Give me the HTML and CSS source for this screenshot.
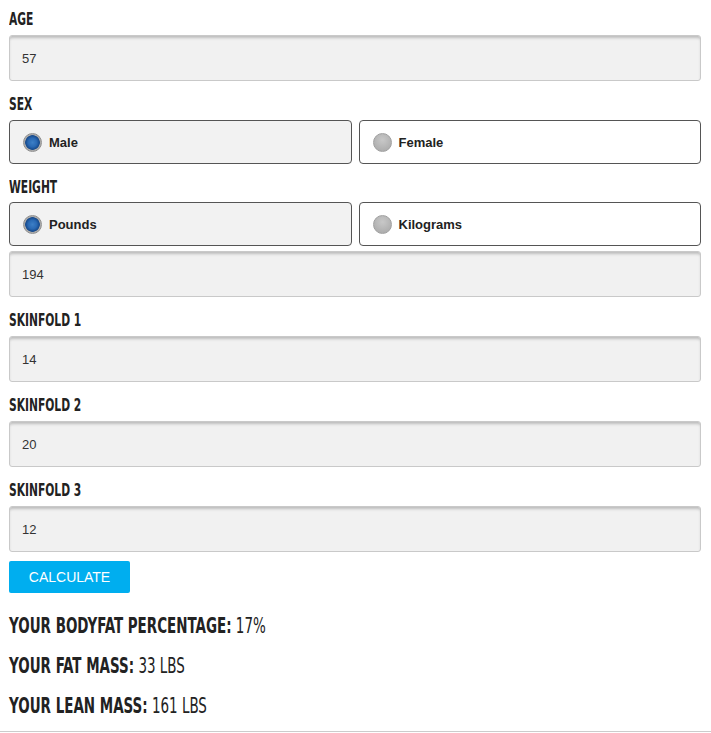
FILE: index.html
```html
<!DOCTYPE html>
<html>
<head>
<meta charset="utf-8">
<link rel="stylesheet" href="styles.css">
</head>
<body>
<div class="calc">
  <div class="field">
    <div class="label"><span class="cond">AGE</span></div>
    <div class="input">57</div>
  </div>
  <div class="field">
    <div class="label"><span class="cond">SEX</span></div>
    <div class="radios">
      <div class="radio selected"><span class="dot"></span><span class="rtext">Male</span></div>
      <div class="radio"><span class="dot"></span><span class="rtext">Female</span></div>
    </div>
  </div>
  <div class="field tight">
    <div class="label"><span class="cond">WEIGHT</span></div>
    <div class="radios">
      <div class="radio selected"><span class="dot"></span><span class="rtext">Pounds</span></div>
      <div class="radio"><span class="dot"></span><span class="rtext">Kilograms</span></div>
    </div>
    <div class="input">194</div>
  </div>
  <div class="field">
    <div class="label"><span class="cond">SKINFOLD 1</span></div>
    <div class="input">14</div>
  </div>
  <div class="field">
    <div class="label"><span class="cond">SKINFOLD 2</span></div>
    <div class="input">20</div>
  </div>
  <div class="field">
    <div class="label"><span class="cond">SKINFOLD 3</span></div>
    <div class="input">12</div>
  </div>
  <button class="btn">CALCULATE</button>
  <div class="results">
    <div class="result"><span class="cond rc"><b>YOUR BODYFAT PERCENTAGE:</b> 17%</span></div>
    <div class="result"><span class="cond rc"><b>YOUR FAT MASS:</b> 33 LBS</span></div>
    <div class="result"><span class="cond rc"><b>YOUR LEAN MASS:</b> 161 LBS</span></div>
  </div>
</div>
<div class="rule"></div>
</body>
</html>
```
FILE: styles.css
```css
html, body {
  margin: 0;
  padding: 0;
  background: #fff;
}
body {
  font-family: "Liberation Sans", Arial, sans-serif;
  color: #222;
}
.calc {
  padding: 9px 10px 0 9px;
  display: flex;
  flex-direction: column;
}
.field {
  display: flex;
  flex-direction: column;
  gap: 6px;
  margin-bottom: 13px;
}
.field.tight {
  gap: 5px;
}
.cond {
  display: inline-block;
  white-space: nowrap;
  transform: scaleX(0.7);
  transform-origin: 0 50%;
}
.label {
  font-family: "DejaVu Sans Condensed", "Liberation Sans Narrow", sans-serif;
  font-weight: bold;
  font-size: 17px;
  line-height: 20px;
  color: #222;
}
.input {
  height: 44px;
  border: 1px solid #c9c9c9;
  border-radius: 3px;
  background: #f1f1f1;
  box-shadow: inset 0 3px 3px -1px rgba(0,0,0,0.22);
  font-size: 13px;
  color: #333;
  display: flex;
  align-items: center;
  padding-left: 12px;
}
.radios {
  display: grid;
  grid-template-columns: 1fr 1fr;
  gap: 7px;
}
.radio {
  height: 42px;
  border: 1px solid #555;
  border-radius: 4px;
  background: #fff;
  display: flex;
  align-items: center;
  padding-left: 13px;
  gap: 7px;
}
.radio.selected {
  background: #f2f2f2;
}
.dot {
  width: 19px;
  height: 19px;
  border-radius: 50%;
  box-sizing: border-box;
  background: radial-gradient(circle at 50% 35%, #c8c8c8, #a6a6a6);
  border: 1px solid #a0a0a0;
}
.radio.selected .dot {
  background: radial-gradient(circle at 50% 50%, #3d7fc6 0, #2a6ab5 35%, #174a8c 58%, #a9a9a9 63%, #c4c4c4 100%);
  border: 1px solid #8f8f8f;
}
.rtext {
  font-weight: bold;
  font-size: 13px;
  color: #222;
}
.btn {
  align-self: flex-start;
  margin-top: -4px;
  width: 121px;
  height: 32px;
  border: none;
  border-radius: 2px;
  background: #00aeef;
  color: #fff;
  font-family: "Liberation Sans", Arial, sans-serif;
  font-size: 14px;
  padding: 0;
  text-transform: uppercase;
}
.results {
  margin-top: 20px;
  display: flex;
  flex-direction: column;
  gap: 14px;
}
.result {
  font-family: "DejaVu Sans Condensed", "Liberation Sans Narrow", sans-serif;
  font-size: 22px;
  line-height: 26px;
  color: #222;
}
.rc {
  transform: scaleX(0.68);
}
.result b {
  font-weight: bold;
}
.rule {
  position: absolute;
  top: 731px;
  left: 0;
  right: 0;
  height: 1px;
  background: #ccc;
}
```
